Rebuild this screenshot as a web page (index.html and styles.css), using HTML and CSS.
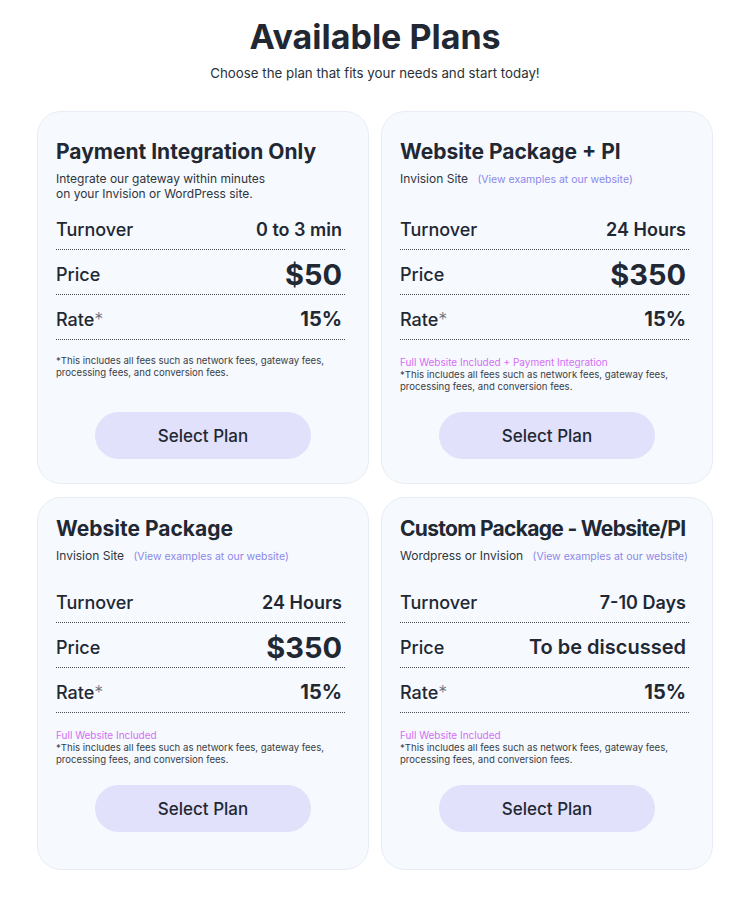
FILE: index.html
```html
<!DOCTYPE html>
<html lang="en">
<head>
    <meta charset="UTF-8">
    <meta name="viewport" content="width=device-width, initial-scale=1.0">
    <title>Available Plans</title>
    <link rel="stylesheet" href="styles.css">
</head>
<body>
    <h1>Available Plans</h1>
    <p class="subtitulo">Choose the plan that fits your needs and start today!</p>

    <div class="planos">
        <div class="plano">
            <h2>Payment Integration Only</h2>
            <p class="descricao">Integrate our gateway within minutes<br>on your Invision or WordPress site.</p>
            <div class="itens">
                <div class="item"><span class="rotulo">Turnover</span><span class="valor">0 to 3 min</span></div>
                <div class="item"><span class="rotulo">Price</span><span class="valor preco">$50</span></div>
                <div class="item"><span class="rotulo">Rate<span class="asterisco">*</span></span><span class="valor taxa">15%</span></div>
            </div>
            <div class="notas">
                <p class="nota">*This includes all fees such as network fees, gateway fees, processing fees, and conversion fees.</p>
            </div>
            <button onclick="escolherPlano(this)">Select Plan</button>
        </div>

        <div class="plano">
            <h2>Website Package + PI</h2>
            <p class="descricao">Invision Site <a href="#">(View examples at our website)</a></p>
            <div class="itens">
                <div class="item"><span class="rotulo">Turnover</span><span class="valor">24 Hours</span></div>
                <div class="item"><span class="rotulo">Price</span><span class="valor preco">$350</span></div>
                <div class="item"><span class="rotulo">Rate<span class="asterisco">*</span></span><span class="valor taxa">15%</span></div>
            </div>
            <div class="notas">
                <p class="incluso">Full Website Included + Payment Integration</p>
                <p class="nota">*This includes all fees such as network fees, gateway fees, processing fees, and conversion fees.</p>
            </div>
            <button onclick="escolherPlano(this)">Select Plan</button>
        </div>

        <div class="plano compacto">
            <h2>Website Package</h2>
            <p class="descricao">Invision Site <a href="#">(View examples at our website)</a></p>
            <div class="itens">
                <div class="item"><span class="rotulo">Turnover</span><span class="valor">24 Hours</span></div>
                <div class="item"><span class="rotulo">Price</span><span class="valor preco">$350</span></div>
                <div class="item"><span class="rotulo">Rate<span class="asterisco">*</span></span><span class="valor taxa">15%</span></div>
            </div>
            <div class="notas">
                <p class="incluso">Full Website Included</p>
                <p class="nota">*This includes all fees such as network fees, gateway fees, processing fees, and conversion fees.</p>
            </div>
            <button onclick="escolherPlano(this)">Select Plan</button>
        </div>

        <div class="plano compacto">
            <h2 class="titulo-longo">Custom Package - Website/PI</h2>
            <p class="descricao">Wordpress or Invision <a href="#">(View examples at our website)</a></p>
            <div class="itens">
                <div class="item"><span class="rotulo">Turnover</span><span class="valor">7-10 Days</span></div>
                <div class="item"><span class="rotulo">Price</span><span class="valor discutir">To be discussed</span></div>
                <div class="item"><span class="rotulo">Rate<span class="asterisco">*</span></span><span class="valor taxa">15%</span></div>
            </div>
            <div class="notas">
                <p class="incluso">Full Website Included</p>
                <p class="nota">*This includes all fees such as network fees, gateway fees, processing fees, and conversion fees.</p>
            </div>
            <button onclick="escolherPlano(this)">Select Plan</button>
        </div>
    </div>

    <script>
        function escolherPlano(botao) {
            const plano = botao.closest('.plano').querySelector('h2').textContent;
            botao.textContent = 'Selected';
            console.log('Plano escolhido: ' + plano);
        }
    </script>
</body>
</html>
```

FILE: styles.css
```css
body {
    font-family: 'Inter', 'Noto Sans', sans-serif;
    background-color: #fff;
    color: #1f2833;
    margin: 0;
    padding: 16px 0 38px;
    text-align: center;
}

h1 {
    font-size: 34px;
    line-height: 41px;
    font-weight: 700;
    margin: 0 0 8px;
    color: #1f2833;
}

.subtitulo {
    font-size: 13.3px;
    line-height: 16px;
    margin: 0 0 30px;
    color: #2b3138;
}

.planos {
    display: grid;
    grid-template-columns: 1fr 1fr;
    column-gap: 12px;
    row-gap: 13px;
    width: 676px;
    margin: 0 auto;
    text-align: left;
}

.plano {
    display: flex;
    flex-direction: column;
    background-color: #f6f9fe;
    border: 1px solid #e8edf5;
    border-radius: 24px;
    padding: 28px 18px 24px;
}

.plano.compacto {
    padding-top: 19px;
    padding-bottom: 37px;
}

h2 {
    font-size: 21px;
    line-height: 24px;
    font-weight: 700;
    margin: 0 0 7px;
    color: #1f2833;
    white-space: nowrap;
}

h2.titulo-longo {
    letter-spacing: -0.7px;
}

.descricao {
    font-size: 12px;
    line-height: 15px;
    margin: 0 0 4px;
    min-height: 30px;
    color: #2f353d;
}

.compacto .descricao {
    min-height: 0;
    margin-bottom: 14px;
}

.descricao a {
    font-size: 10.5px;
    color: #8c88e8;
    text-decoration: none;
    margin-left: 6px;
}

.itens {
    margin-right: 5px;
}

.item {
    display: flex;
    justify-content: space-between;
    align-items: center;
    height: 45px;
    padding: 4px 3px 0 0;
    box-sizing: border-box;
    border-bottom: 1px dotted #4a4f57;
}

.rotulo {
    font-size: 18px;
    font-weight: 500;
    color: #1f2833;
}

.asterisco {
    font-weight: 300;
    color: #6b7280;
}

.valor {
    font-size: 18px;
    font-weight: 600;
    color: #1f2833;
}

.valor.preco {
    font-size: 29px;
    font-weight: 700;
}

.valor.taxa {
    font-size: 20px;
    font-weight: 700;
}

.valor.discutir {
    font-size: 20px;
}

.notas {
    margin: 15px 0 19px;
}

.incluso {
    font-size: 10px;
    line-height: 14px;
    margin: 0;
    color: #d56ef3;
}

.nota {
    font-size: 9.6px;
    line-height: 12px;
    margin: 0;
    color: #3a3f46;
}

button {
    margin-top: auto;
    align-self: center;
    width: 216px;
    height: 47px;
    font-family: inherit;
    font-size: 17px;
    font-weight: 500;
    color: #1f2833;
    background: #e1e1fb;
    border: none;
    border-radius: 24px;
    cursor: pointer;
    transition: 0.3s;
}

button:hover {
    background: #d4d4f7;
}
```
